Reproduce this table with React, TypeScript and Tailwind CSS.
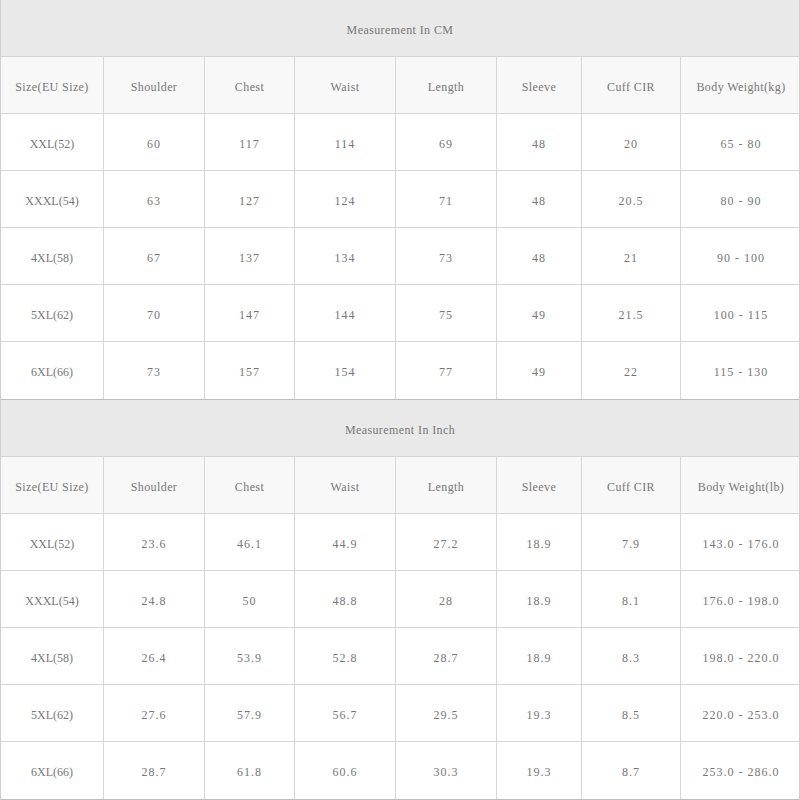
const cols = ['Size(EU Size)', 'Shoulder', 'Chest', 'Waist', 'Length', 'Sleeve', 'Cuff CIR']

const sizes = ['XXL(52)', 'XXXL(54)', '4XL(58)', '5XL(62)', '6XL(66)']

const cmRows = [
  ['60', '117', '114', '69', '48', '20', '65 - 80'],
  ['63', '127', '124', '71', '48', '20.5', '80 - 90'],
  ['67', '137', '134', '73', '48', '21', '90 - 100'],
  ['70', '147', '144', '75', '49', '21.5', '100 - 115'],
  ['73', '157', '154', '77', '49', '22', '115 - 130'],
]

const inchRows = [
  ['23.6', '46.1', '44.9', '27.2', '18.9', '7.9', '143.0 - 176.0'],
  ['24.8', '50', '48.8', '28', '18.9', '8.1', '176.0 - 198.0'],
  ['26.4', '53.9', '52.8', '28.7', '18.9', '8.3', '198.0 - 220.0'],
  ['27.6', '57.9', '56.7', '29.5', '19.3', '8.5', '220.0 - 253.0'],
  ['28.7', '61.8', '60.6', '30.3', '19.3', '8.7', '253.0 - 286.0'],
]

function SizeTable({ title, weight, rows }: { title: string; weight: string; rows: string[][] }) {
  const header = [...cols, weight]
  return (
    <div className="border-b border-[#bdbdbd]">
      <div className="h-[57px] pt-[3px] flex items-center justify-center bg-[#e9e9e9] border-b border-[#d6d6d6]">
        {title}
      </div>
      <div className="grid grid-cols-[103px_101px_90px_101px_101px_85px_99px_120px]">
        {header.map((h, i) => (
          <div
            key={h}
            className={`h-[57px] pt-[3px] flex items-center justify-center bg-[#f8f8f8] border-b border-[#d6d6d6] ${i < 7 ? 'border-r' : ''}`}
          >
            {h}
          </div>
        ))}
        {rows.map((r, ri) =>
          [sizes[ri], ...r].map((v, i) => (
            <div
              key={`${ri}-${i}`}
              className={`h-[57px] pt-[3px] flex items-center justify-center bg-white border-[#d6d6d6] ${i < 7 ? 'border-r' : ''} ${ri < 4 ? 'border-b' : ''} ${i > 0 ? 'tracking-[1px]' : 'tracking-[0px]'}`}
            >
              {v}
            </div>
          ))
        )}
      </div>
    </div>
  )
}

export default function App() {
  return (
    <div className="w-[800px] h-[800px] overflow-hidden bg-white text-[#777777] text-[12px] tracking-[0.4px] font-['Liberation_Serif',serif] border-l border-r border-[#d0d0d0]">
      <SizeTable title="Measurement In CM" weight="Body Weight(kg)" rows={cmRows} />
      <SizeTable title="Measurement In Inch" weight="Body Weight(lb)" rows={inchRows} />
    </div>
  )
}
